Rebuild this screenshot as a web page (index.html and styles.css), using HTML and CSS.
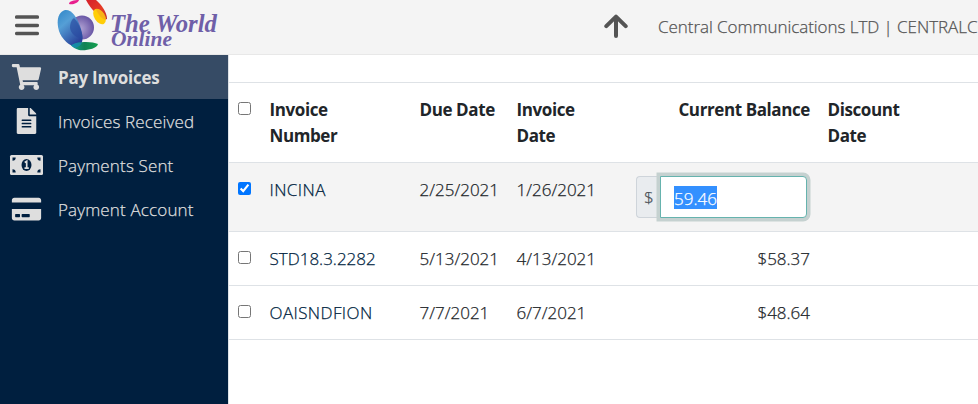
FILE: index.html
```
<!DOCTYPE html>
<html lang="en">
<head>
    <meta charset="UTF-8">
    <meta name="viewport" content="width=device-width, initial-scale=1.0">
    <title>Pay Invoices</title>
    <link rel="stylesheet" href="styles.css">
</head>
<body>
    <header class="topbar">
        <svg class="menu" viewBox="0 0 24 22" width="24" height="22">
            <path d="M1.7 2.1h20.6M1.7 10.4h20.6M1.7 18.5h20.6" stroke="#545454" stroke-width="3.5" stroke-linecap="round"/>
        </svg>
        <svg class="logo" viewBox="0 0 170 54" width="170" height="54">
            <defs>
                <linearGradient id="blue" x1="0" y1="0" x2="0.6" y2="1">
                    <stop offset="0" stop-color="#2f86c8"/>
                    <stop offset="0.4" stop-color="#559fd6"/>
                    <stop offset="1" stop-color="#29439b"/>
                </linearGradient>
                <radialGradient id="purple" cx="0.42" cy="0.55" r="0.6">
                    <stop offset="0" stop-color="#b3a5d5"/>
                    <stop offset="1" stop-color="#6451a2"/>
                </radialGradient>
                <linearGradient id="red" x1="0" y1="0" x2="1" y2="1">
                    <stop offset="0" stop-color="#d51f2b"/>
                    <stop offset="0.6" stop-color="#e63c25"/>
                    <stop offset="1" stop-color="#b9292f"/>
                </linearGradient>
                <linearGradient id="green" x1="0" y1="0" x2="1" y2="0">
                    <stop offset="0" stop-color="#13a095"/>
                    <stop offset="0.5" stop-color="#128254"/>
                    <stop offset="1" stop-color="#13a14e"/>
                </linearGradient>
            </defs>
            <circle cx="25" cy="27.5" r="12" fill="url(#purple)"/>
            <path d="M8 10C14 9 20 17 23 26C26 35 27 43 22 46C15 49 5 40 2 31C-1 21 1 12 8 10Z" fill="url(#blue)"/>
            <path d="M17 18C21 22 25.500 31 25.500 38.500C19 38 14 34 13 28C13 24 14 20 17 18Z" fill="#294aa0" opacity="0.65"/>
            <path d="M14 45.500C20 41 35 41 41 44C40 49 28 51 22 50C18 49 16 47 14 45.500Z" fill="url(#green)"/>
            <path d="M14 45.500C17 43 21 42.500 25 42.500C24 45 22 47 18 48Z" fill="#1888b0" opacity="0.8"/>
            <path d="M12 4C12 1 17 0 22 0C21 3 16 5 12 4Z" fill="#e81e8c"/>
            <path d="M29 0H39C44 4 50 12 50 19C46 21 34 10 29 0Z" fill="url(#red)"/>
            <ellipse cx="42.500" cy="16.500" rx="5.200" ry="8.600" transform="rotate(-32 42.500 16.500)" fill="#ffcd08"/>
            <path d="M39 9C43 8.500 49 13 49 20C45 19 41 15 39 9Z" fill="#f5a61d" opacity="0.7"/>
            <g class="logo-text">
                <text x="53" y="32" font-size="25" textLength="107" lengthAdjust="spacingAndGlyphs">The World</text>
                <text x="54" y="46" font-size="20" textLength="61" lengthAdjust="spacingAndGlyphs">Online</text>
            </g>
        </svg>
        <svg class="up" viewBox="0 0 24 24" width="24" height="24">
            <path d="M2.300 12.200L12 2.600L21.700 12.200M12 3V22" fill="none" stroke="#545454" stroke-width="4" stroke-linecap="round" stroke-linejoin="round"/>
        </svg>
        <span class="account">Central Communications LTD | CENTRALCOM</span>
    </header>

    <div class="page">
        <nav class="sidebar">
            <a class="nav-item active">
                <svg viewBox="0 0 576 512" width="29" height="26"><path d="M528.120 301.319l47.273-208C578.806 78.301 567.391 64 551.990 64H159.208l-9.166-44.810C147.758 8.021 137.930 0 126.529 0H24C10.745 0 0 10.745 0 24v16c0 13.255 10.745 24 24 24h69.883l70.248 343.435C147.325 417.100 136 435.222 136 456c0 30.928 25.072 56 56 56s56-25.072 56-56c0-15.674-6.447-29.835-16.824-40h209.647C430.447 426.165 424 440.326 424 456c0 30.928 25.072 56 56 56s56-25.072 56-56c0-22.172-12.888-41.332-31.579-50.405l5.517-24.276c3.413-15.018-8.002-29.319-23.403-29.319H218.117l-6.545-32h293.145c11.206 0 20.920-7.754 23.403-18.681z"/></svg>
                <span>Pay Invoices</span>
            </a>
            <a class="nav-item">
                <svg viewBox="0 0 384 512" width="20" height="26"><path d="M224 136V0H24C10.700 0 0 10.700 0 24v464c0 13.300 10.700 24 24 24h336c13.300 0 24-10.700 24-24V160H248c-13.200 0-24-10.800-24-24zm64 236c0 6.600-5.400 12-12 12H108c-6.600 0-12-5.400-12-12v-8c0-6.600 5.400-12 12-12h168c6.600 0 12 5.400 12 12v8zm0-64c0 6.600-5.400 12-12 12H108c-6.600 0-12-5.400-12-12v-8c0-6.600 5.400-12 12-12h168c6.600 0 12 5.400 12 12v8zm0-72v8c0 6.600-5.400 12-12 12H108c-6.600 0-12-5.400-12-12v-8c0-6.600 5.400-12 12-12h168c6.600 0 12 5.400 12 12zm96-114.100v6.100H256V0h6.100c6.400 0 12.500 2.500 17 7l97.900 98c4.500 4.500 7 10.600 7 16.900z"/></svg>
                <span>Invoices Received</span>
            </a>
            <a class="nav-item">
                <svg viewBox="0 0 33 26" width="33" height="26">
                    <rect x="0" y="3" width="33" height="20" rx="1.500"/>
                    <ellipse cx="16.500" cy="13" rx="5" ry="6" fill="#001f3f"/>
                    <path d="M14.700 10.500L16.700 9.300V16M14.500 16.200H18.800" fill="none" stroke="#dedede" stroke-width="1.700"/>
                    <path d="M2.500 5.500h3.200a3.200 3.200 0 0 1-3.200 3.200zM30.500 5.500h-3.200a3.200 3.200 0 0 0 3.200 3.200zM2.500 20.500h3.200a3.200 3.200 0 0 0-3.200-3.200zM30.500 20.500h-3.200a3.200 3.200 0 0 1 3.200-3.200z" fill="#001f3f"/>
                </svg>
                <span>Payments Sent</span>
            </a>
            <a class="nav-item">
                <svg viewBox="0 0 576 512" width="30" height="26"><path d="M0 432c0 26.500 21.500 48 48 48h480c26.500 0 48-21.500 48-48V256H0v176zm192-68c0-6.600 5.400-12 12-12h136c6.600 0 12 5.400 12 12v40c0 6.600-5.400 12-12 12H204c-6.600 0-12-5.400-12-12v-40zm-128 0c0-6.600 5.400-12 12-12h72c6.600 0 12 5.400 12 12v40c0 6.600-5.400 12-12 12H76c-6.600 0-12-5.400-12-12v-40zM576 80v48H0V80c0-26.500 21.500-48 48-48h480c26.500 0 48 21.500 48 48z"/></svg>
                <span>Payment Account</span>
            </a>
        </nav>

        <main class="content">
            <table class="invoices">
                <colgroup>
                    <col class="col-check">
                    <col class="col-number">
                    <col class="col-due">
                    <col class="col-date">
                    <col class="col-balance">
                    <col class="col-discount">
                    <col>
                </colgroup>
                <thead>
                    <tr>
                        <th><input type="checkbox"></th>
                        <th>Invoice<br>Number</th>
                        <th>Due Date</th>
                        <th>Invoice<br>Date</th>
                        <th class="amount">Current Balance</th>
                        <th>Discount<br>Date</th>
                        <th></th>
                    </tr>
                </thead>
                <tbody>
                    <tr class="selected">
                        <td><input type="checkbox" checked></td>
                        <td class="number alpha">INCINA</td>
                        <td>2/25/2021</td>
                        <td>1/26/2021</td>
                        <td class="amount">
                            <div class="input-group">
                                <span class="prefix">$</span>
                                <div class="field"><span class="highlight">59.46</span></div>
                            </div>
                        </td>
                        <td></td>
                        <td></td>
                    </tr>
                    <tr>
                        <td><input type="checkbox"></td>
                        <td class="number">STD18.3.2282</td>
                        <td>5/13/2021</td>
                        <td>4/13/2021</td>
                        <td class="amount">$58.37</td>
                        <td></td>
                        <td></td>
                    </tr>
                    <tr>
                        <td><input type="checkbox"></td>
                        <td class="number alpha">OAISNDFION</td>
                        <td>7/7/2021</td>
                        <td>6/7/2021</td>
                        <td class="amount">$48.64</td>
                        <td></td>
                        <td></td>
                    </tr>
                </tbody>
            </table>
        </main>
    </div>
</body>
</html>
```
FILE: styles.css
```
* {
    box-sizing: border-box;
}
body {
    margin: 0;
    height: 100vh;
    overflow: hidden;
    display: flex;
    flex-direction: column;
    font-family: "Open Sans", "Noto Sans", sans-serif;
    font-size: 17px;
    font-weight: 300;
    line-height: 26px;
    -webkit-text-stroke: 0.25px;
    color: #212529;
    background: #fff;
}
.topbar {
    display: flex;
    align-items: flex-start;
    flex: none;
    height: 55px;
    background: #f4f4f4;
    border-bottom: 1px solid #e8e8e8;
}
.menu {
    flex: none;
    margin: 14.5px 0 0 15px;
}
.logo {
    flex: none;
    margin-left: 18px;
}
.logo-text {
    font-family: "Liberation Serif", serif;
    font-style: italic;
    font-weight: bold;
    fill: #6f5fa8;
    -webkit-text-stroke: 0;
}
.up {
    flex: none;
    margin: 14px 0 0 377px;
}
.account {
    margin: 14px 0 0 30px;
    white-space: nowrap;
    color: #545454;
    letter-spacing: -0.05px;
}
.page {
    display: flex;
    flex: 1;
}
.sidebar {
    flex: none;
    width: 228px;
    background: #001f3f;
}
.nav-item {
    display: flex;
    align-items: center;
    height: 44px;
    color: #dedede;
    letter-spacing: 0.15px;
}
.nav-item svg {
    flex: none;
    width: 53px;
    fill: #dedede;
}
.nav-item span {
    margin-left: 5px;
    padding-top: 1px;
}
.nav-item.active {
    background: #364b65;
    font-weight: 700;
    letter-spacing: -0.25px;
    -webkit-text-stroke: 0;
}
.content {
    flex: 1;
    min-width: 0;
    padding-top: 27px;
    border-left: 1px solid #dee2e6;
}
.invoices {
    width: 100%;
    table-layout: fixed;
    border-collapse: separate;
    border-spacing: 0;
    border-bottom: 1px solid #dee2e6;
}
.col-check {
    width: 32px;
}
.col-number {
    width: 150px;
}
.col-due {
    width: 97px;
}
.col-date {
    width: 119px;
}
.col-balance {
    width: 192px;
}
.col-discount {
    width: 110px;
}
th, td {
    padding: 14px 9px 13px 8.5px;
    border-top: 1px solid #dee2e6;
    text-align: left;
    vertical-align: top;
    white-space: nowrap;
}
th {
    height: 80px;
    font-weight: 700;
    letter-spacing: -0.4px;
    -webkit-text-stroke: 0;
}
td {
    height: 54px;
}
.selected td {
    height: 69px;
    background: #f4f4f4;
}
.number {
    color: #001f3f;
}
.alpha {
    letter-spacing: 0.4px;
}
th.amount, td.amount {
    text-align: right;
}
input[type="checkbox"] {
    display: block;
    width: 13px;
    height: 13px;
    margin: 5px 0 0 0.5px;
    accent-color: #0075ff;
}
.selected .amount {
    padding: 13px 12px 0 9px;
}
.input-group {
    display: flex;
    height: 42px;
    text-align: left;
}
.prefix {
    width: 24px;
    padding: 8px 0 0 7px;
    background: #e9ecef;
    border: 1px solid #ced4da;
    border-right: none;
    border-radius: 4px 0 0 4px;
    color: #495057;
}
.field {
    flex: 1;
    padding: 9px 0 0 13px;
    background: #fff;
    border: 1px solid #66b3ae;
    border-radius: 0 4px 4px 0;
    box-shadow: 0 0 0 3.5px #c5d1d0;
}
.highlight {
    display: inline-block;
    height: 23px;
    line-height: 25px;
    background: #3390ff;
    color: #fff;
}
```
